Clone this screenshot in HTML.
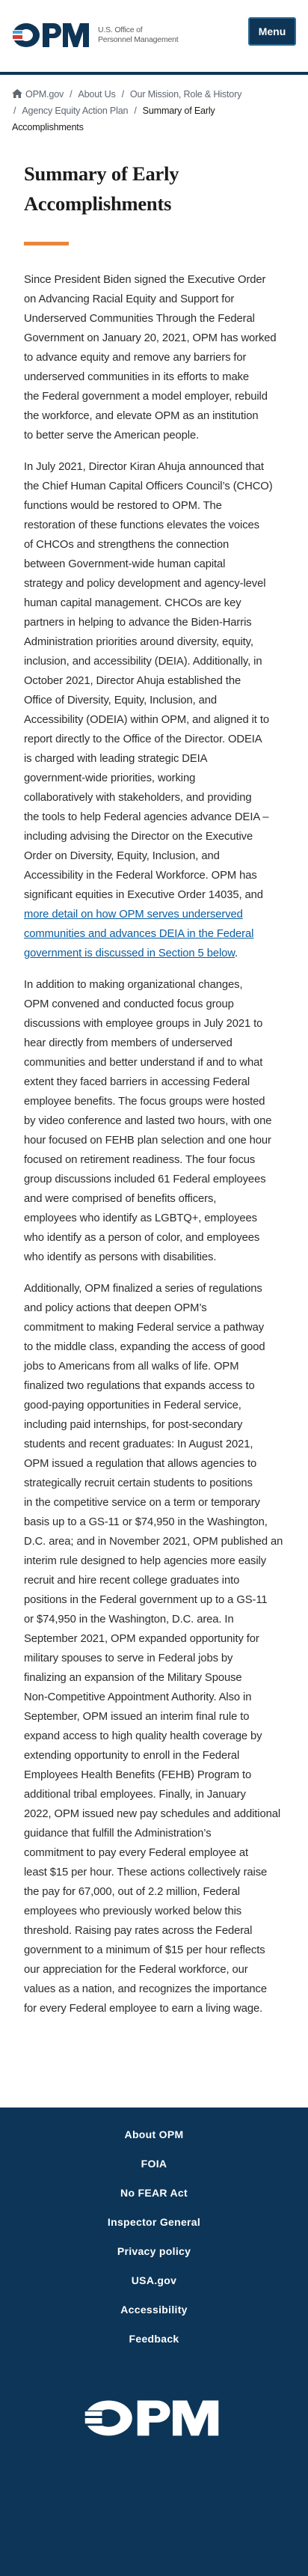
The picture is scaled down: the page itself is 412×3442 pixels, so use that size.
<!DOCTYPE html>
<html><head><meta charset="utf-8">
<style>
*{margin:0;padding:0;box-sizing:border-box}
body{width:412px;height:3442px;background:#fff;font-family:"Liberation Sans",sans-serif;position:relative;overflow:hidden}
.hdr{position:absolute;left:0;top:0;width:412px;height:96px}
.logo{position:absolute;left:16px;top:30px}
.tag{position:absolute;left:131px;top:34px;font-size:10.5px;line-height:13px;color:#5c5c5c;letter-spacing:-0.2px}
.menu{position:absolute;left:332px;top:23px;width:64px;height:38px;background:#0f3556;border:2px solid #2b6a93;border-radius:3px;color:#fff;font-weight:bold;font-size:14px;text-align:center;line-height:34px}
.rule{position:absolute;left:0;top:96px;width:412px;height:4px;background:#0f3556}
.bc{position:absolute;left:16px;top:115px;width:380px;font-size:12.6px;line-height:22px;color:#5f6670;letter-spacing:-0.2px}
.bc .cur{color:#1b1b1b}
.bc .s{margin:0 8px}
h1{position:absolute;left:32px;top:212px;font-family:"Liberation Serif",serif;font-weight:bold;font-size:26.5px;line-height:40px;color:#1b1b1b;letter-spacing:-0.2px}
.bar{position:absolute;left:32px;top:323px;width:60px;height:5px;background:#e8883a}
.txt{position:absolute;left:32px;top:361px;font-size:14.8px;line-height:26px;color:#2b2b2b;white-space:nowrap;letter-spacing:-0.1px}
.txt p{margin-bottom:16px}
.txt a{color:#0a5da0;text-decoration:underline}
.foot{position:absolute;left:0;top:2816px;width:412px;height:626px;background:#0c3558}
.fl{position:absolute;left:0;width:412px;text-align:center;color:#fff;font-weight:bold;font-size:14px;letter-spacing:0.3px}
.flogo{position:absolute;left:112px;top:3206px}
</style></head><body>
<div class="hdr">
<svg class="logo" width="104" height="34" viewBox="0 0 104 34">
<path fill="#0f3556" fill-rule="evenodd" d="M19 1 A18 16 0 1 1 19 33 A18 16 0 1 1 19 1 Z M19 9 A9 8 0 1 0 19 25 A9 8 0 1 0 19 9 Z"/>
<rect x="0" y="10" width="14" height="14" fill="#fff"/>
<rect x="1" y="11" width="13" height="4" fill="#4aa3d8"/>
<rect x="1" y="17" width="13" height="5" fill="#d83933"/>
<path fill="#0f3556" d="M41 1 h15 a10 10 0 0 1 0 20 h-6 v12 h-9 Z M50 8 v7 h5 a3.5 3.5 0 0 0 0 -7 Z"/>
<path fill="#0f3556" d="M68 1 h11 l6 17 l6 -17 h12 v32 h-8 v-21 l-7 21 h-6 l-7 -21 v21 h-7 Z"/>
</svg>
<div class="tag">U.S. Office of<br>Personnel Management</div>
<div class="menu">Menu</div>
</div>
<div class="rule"></div>
<div class="bc"><svg width="14" height="12" viewBox="0 0 14 12" style="vertical-align:-1px;margin-right:4px"><path fill="#5f6670" d="M7 0 L14 6 H12 V12 H8.5 V8 H5.5 V12 H2 V6 H0 Z"/></svg>OPM.gov<span class="s">/</span>About Us<span class="s">/</span>Our Mission, Role &amp; History<br><span class="s" style="margin-left:2px">/</span>Agency Equity Action Plan<span class="s">/</span><span class="cur">Summary of Early<br>Accomplishments</span></div>
<h1>Summary of Early<br>Accomplishments</h1>
<div class="bar"></div>
<div class="txt">
<p>Since President Biden signed the Executive Order<br>on Advancing Racial Equity and Support for<br>Underserved Communities Through the Federal<br>Government on January 20, 2021, OPM has worked<br>to advance equity and remove any barriers for<br>underserved communities in its efforts to make<br>the Federal government a model employer, rebuild<br>the workforce, and elevate OPM as an institution<br>to better serve the American people.</p>
<p>In July 2021, Director Kiran Ahuja announced that<br>the Chief Human Capital Officers Council’s (CHCO)<br>functions would be restored to OPM. The<br>restoration of these functions elevates the voices<br>of CHCOs and strengthens the connection<br>between Government-wide human capital<br>strategy and policy development and agency-level<br>human capital management. CHCOs are key<br>partners in helping to advance the Biden-Harris<br>Administration priorities around diversity, equity,<br>inclusion, and accessibility (DEIA). Additionally, in<br>October 2021, Director Ahuja established the<br>Office of Diversity, Equity, Inclusion, and<br>Accessibility (ODEIA) within OPM, and aligned it to<br>report directly to the Office of the Director. ODEIA<br>is charged with leading strategic DEIA<br>government-wide priorities, working<br>collaboratively with stakeholders, and providing<br>the tools to help Federal agencies advance DEIA –<br>including advising the Director on the Executive<br>Order on Diversity, Equity, Inclusion, and<br>Accessibility in the Federal Workforce. OPM has<br>significant equities in Executive Order 14035, and<br><a>more detail on how OPM serves underserved<br>communities and advances DEIA in the Federal<br>government is discussed in Section 5 below</a>.</p>
<p>In addition to making organizational changes,<br>OPM convened and conducted focus group<br>discussions with employee groups in July 2021 to<br>hear directly from members of underserved<br>communities and better understand if and to what<br>extent they faced barriers in accessing Federal<br>employee benefits. The focus groups were hosted<br>by video conference and lasted two hours, with one<br>hour focused on FEHB plan selection and one hour<br>focused on retirement readiness. The four focus<br>group discussions included 61 Federal employees<br>and were comprised of benefits officers,<br>employees who identify as LGBTQ+, employees<br>who identify as a person of color, and employees<br>who identify as persons with disabilities.</p>
<p>Additionally, OPM finalized a series of regulations<br>and policy actions that deepen OPM’s<br>commitment to making Federal service a pathway<br>to the middle class, expanding the access of good<br>jobs to Americans from all walks of life. OPM<br>finalized two regulations that expands access to<br>good-paying opportunities in Federal service,<br>including paid internships, for post-secondary<br>students and recent graduates: In August 2021,<br>OPM issued a regulation that allows agencies to<br>strategically recruit certain students to positions<br>in the competitive service on a term or temporary<br>basis up to a GS-11 or $74,950 in the Washington,<br>D.C. area; and in November 2021, OPM published an<br>interim rule designed to help agencies more easily<br>recruit and hire recent college graduates into<br>positions in the Federal government up to a GS-11<br>or $74,950 in the Washington, D.C. area. In<br>September 2021, OPM expanded opportunity for<br>military spouses to serve in Federal jobs by<br>finalizing an expansion of the Military Spouse<br>Non-Competitive Appointment Authority. Also in<br>September, OPM issued an interim final rule to<br>expand access to high quality health coverage by<br>extending opportunity to enroll in the Federal<br>Employees Health Benefits (FEHB) Program to<br>additional tribal employees. Finally, in January<br>2022, OPM issued new pay schedules and additional<br>guidance that fulfill the Administration’s<br>commitment to pay every Federal employee at<br>least $15 per hour. These actions collectively raise<br>the pay for 67,000, out of 2.2 million, Federal<br>employees who previously worked below this<br>threshold. Raising pay rates across the Federal<br>government to a minimum of $15 per hour reflects<br>our appreciation for the Federal workforce, our<br>values as a nation, and recognizes the importance<br>for every Federal employee to earn a living wage.</p>
</div>
<div class="foot"></div>
<div class="fl" style="top:2844px">About OPM</div>
<div class="fl" style="top:2883px">FOIA</div>
<div class="fl" style="top:2922px">No FEAR Act</div>
<div class="fl" style="top:2961px">Inspector General</div>
<div class="fl" style="top:3000px">Privacy policy</div>
<div class="fl" style="top:3039px">USA.gov</div>
<div class="fl" style="top:3078px">Accessibility</div>
<div class="fl" style="top:3117px">Feedback</div>
<svg class="flogo" width="182" height="50" viewBox="0 0 104 34" preserveAspectRatio="none">
<path fill="#fff" fill-rule="evenodd" d="M19 1 A18 16 0 1 1 19 33 A18 16 0 1 1 19 1 Z M19 9 A9 8 0 1 0 19 25 A9 8 0 1 0 19 9 Z"/>
<rect x="0" y="10" width="14" height="14" fill="#0c3558"/>
<rect x="1" y="11" width="13" height="4" fill="#fff"/>
<rect x="1" y="17" width="13" height="5" fill="#fff"/>
<path fill="#fff" d="M41 1 h15 a10 10 0 0 1 0 20 h-6 v12 h-9 Z M50 8 v7 h5 a3.5 3.5 0 0 0 0 -7 Z"/>
<path fill="#fff" d="M68 1 h11 l6 17 l6 -17 h12 v32 h-8 v-21 l-7 21 h-6 l-7 -21 v21 h-7 Z"/>
</svg>
</body></html>
